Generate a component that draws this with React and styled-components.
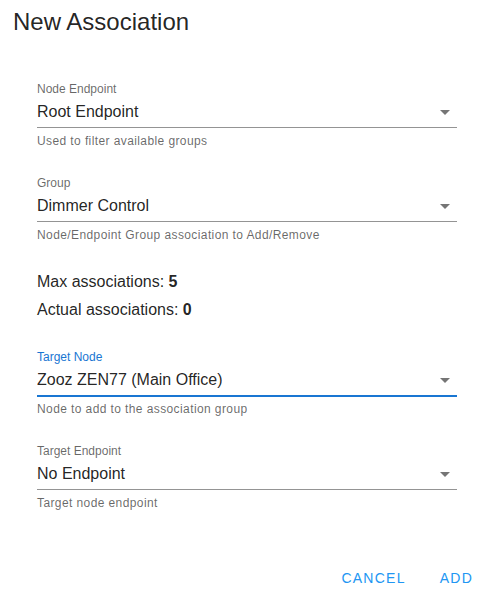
import React from "react";
import styled, { createGlobalStyle } from "styled-components";

const Global = createGlobalStyle`
  html, body { margin: 0; padding: 0; background: #fff; }
  body { font-family: "Liberation Sans", Arial, sans-serif; }
  * { box-sizing: border-box; }
`;

const Dialog = styled.div`
  width: 497px;
  height: 603px;
  background: #fff;
  display: flex;
  flex-direction: column;
`;

const Title = styled.h2`
  margin: 6px 0 0 13px;
  font-size: 24px;
  line-height: 32px;
  font-weight: 400;
  color: rgba(0, 0, 0, 0.87);
`;

const Body = styled.div`
  padding: 44px 40px 0 37px;
  display: flex;
  flex-direction: column;
`;

const Field = styled.div`
  display: flex;
  flex-direction: column;
  margin-bottom: ${(p) => p.$mb ?? 28}px;
`;

const Label = styled.div`
  font-size: 12px;
  line-height: 14px;
  color: ${(p) => (p.$focused ? "#1976d2" : "rgba(0, 0, 0, 0.6)")};
`;

const ValueRow = styled.div`
  height: 32px;
  display: flex;
  align-items: center;
  border-bottom: 1px solid ${(p) => (p.$focused ? "#1976d2" : "rgba(0, 0, 0, 0.42)")};
  box-shadow: ${(p) => (p.$focused ? "0 1px 0 #1976d2" : "none")};
`;

const Value = styled.div`
  flex: 1;
  font-size: 16px;
  line-height: 20px;
  color: rgba(0, 0, 0, 0.87);
  padding-top: 1px;
`;

const Arrow = styled.svg`
  width: 24px;
  height: 24px;
  flex: none;
  fill: rgba(0, 0, 0, 0.54);
`;

const Hint = styled.div`
  margin-top: 6px;
  font-size: 12px;
  line-height: 14px;
  letter-spacing: 0.0333em;
  color: rgba(0, 0, 0, 0.6);
`;

const Stats = styled.div`
  display: flex;
  flex-direction: column;
  margin: 0 0 26px;
`;

const Stat = styled.div`
  font-size: 16px;
  line-height: 28px;
  color: rgba(0, 0, 0, 0.87);
  b { font-weight: 700; }
`;

const Actions = styled.div`
  margin-top: auto;
  margin-bottom: 7px;
  display: flex;
  justify-content: flex-end;
  padding-right: 8px;
  gap: 2px;
`;

const Button = styled.button`
  height: 36px;
  min-width: 64px;
  padding: 0 16px;
  border: none;
  background: transparent;
  font-family: "Liberation Sans", Arial, sans-serif;
  font-size: 14px;
  font-weight: 400;
  letter-spacing: 0.0892em;
  text-transform: uppercase;
  color: #2196f3;
  cursor: pointer;
`;

function Select({ label, value, hint, focused, mb }) {
  return (
    <Field $mb={mb}>
      <Label $focused={focused}>{label}</Label>
      <ValueRow $focused={focused}>
        <Value>{value}</Value>
        <Arrow viewBox="0 0 24 24">
          <path d="M7,10L12,15L17,10H7Z" />
        </Arrow>
      </ValueRow>
      <Hint>{hint}</Hint>
    </Field>
  );
}

export default function App() {
  return (
    <>
      <Global />
      <Dialog>
        <Title>New Association</Title>
        <Body>
          <Select label="Node Endpoint" value="Root Endpoint" hint="Used to filter available groups" />
          <Select label="Group" value="Dimmer Control" hint="Node/Endpoint Group association to Add/Remove" mb={26} />
          <Stats>
            <Stat>Max associations: <b>5</b></Stat>
            <Stat>Actual associations: <b>0</b></Stat>
          </Stats>
          <Select label="Target Node" value="Zooz ZEN77 (Main Office)" hint="Node to add to the association group" focused />
          <Select label="Target Endpoint" value="No Endpoint" hint="Target node endpoint" mb={0} />
        </Body>
        <Actions>
          <Button>Cancel</Button>
          <Button>Add</Button>
        </Actions>
      </Dialog>
    </>
  );
}
